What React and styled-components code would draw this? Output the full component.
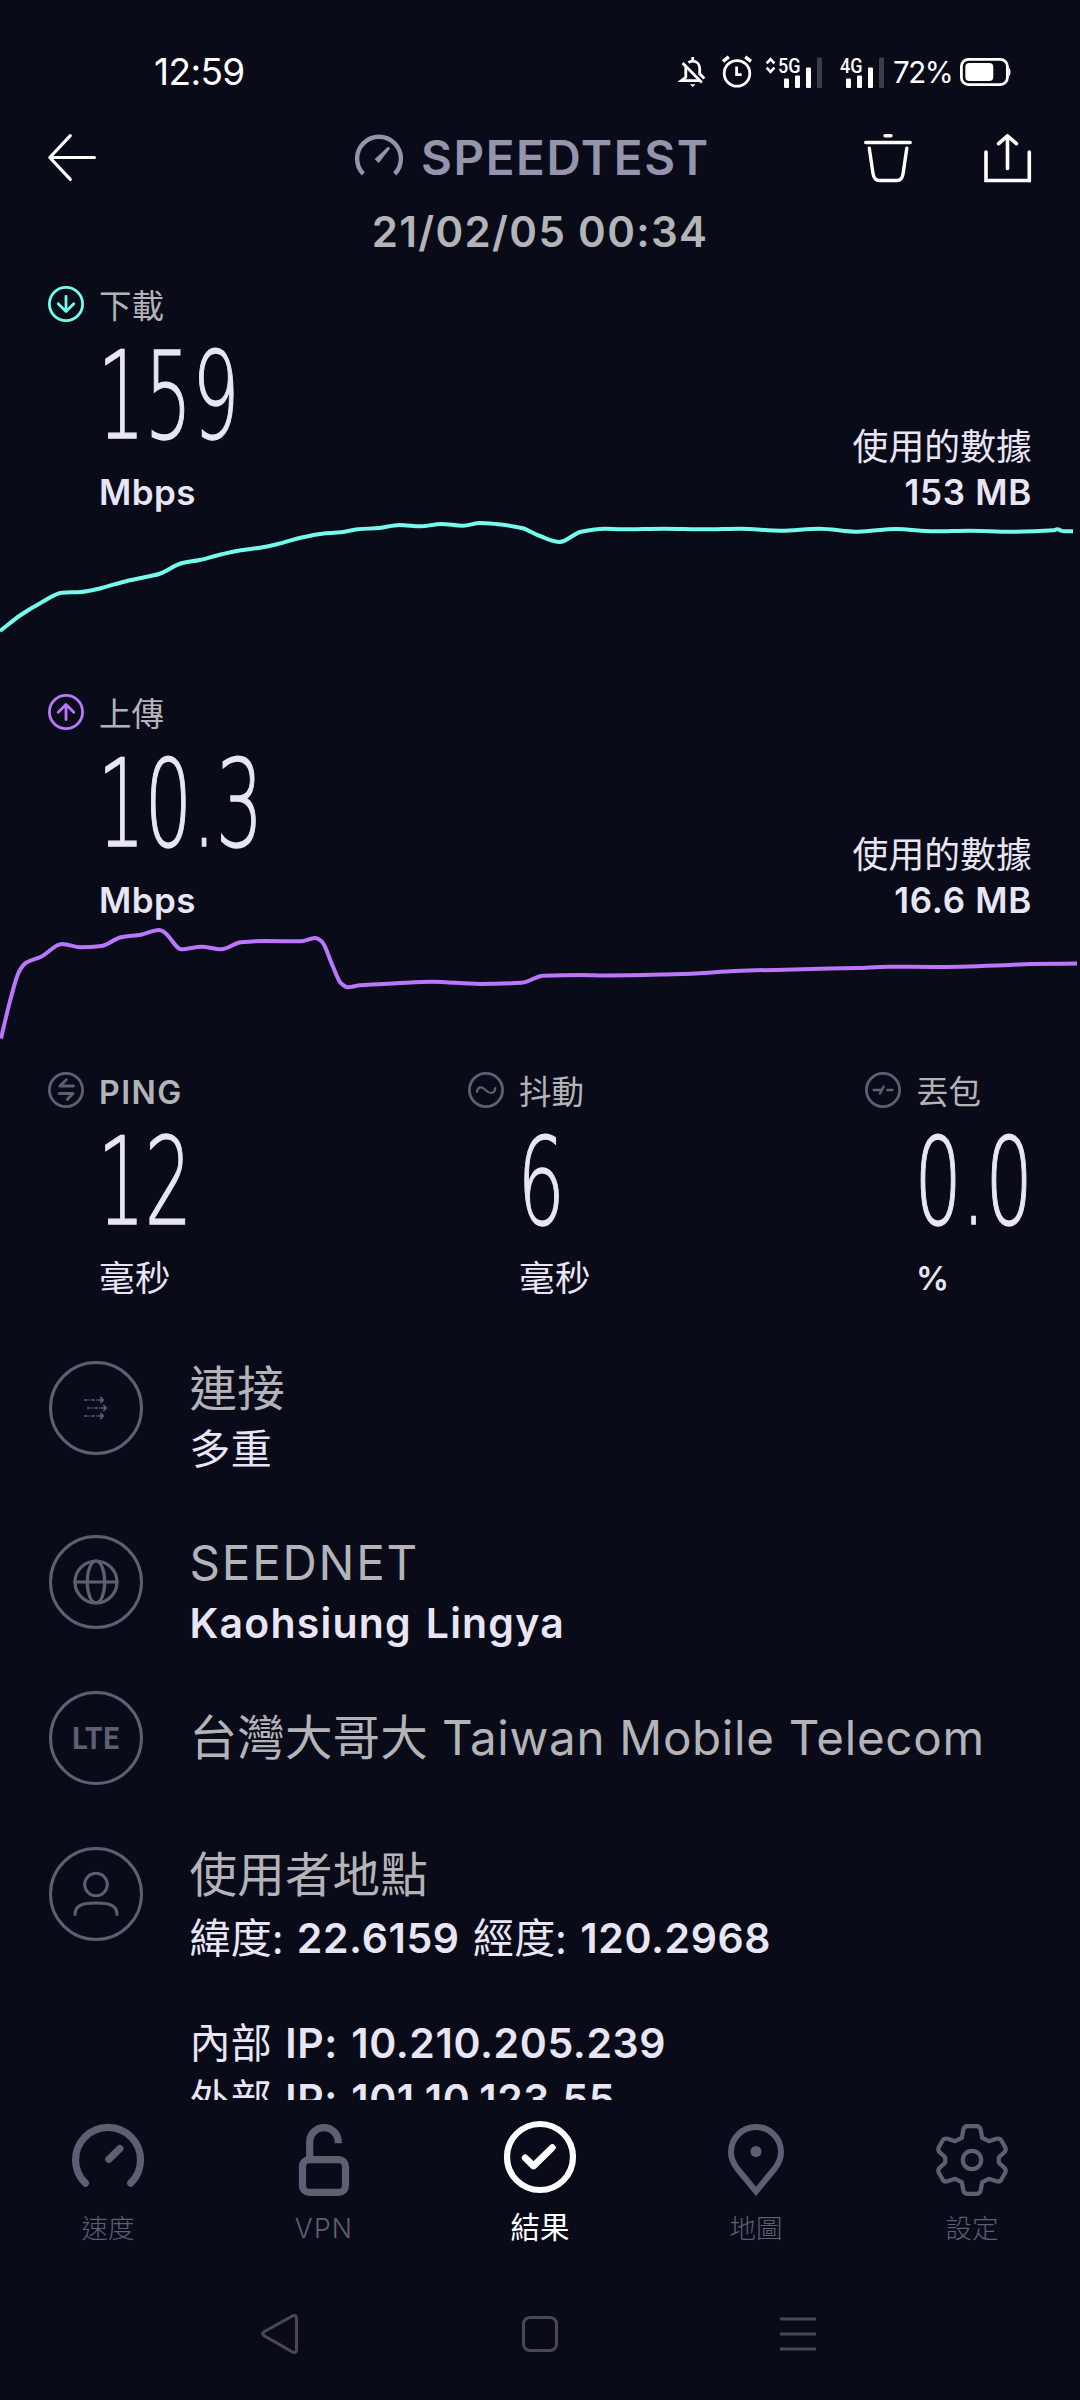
import React from "react";
import styled, { createGlobalStyle, css } from "styled-components";

const colors = {
  base: "#0a0b19",
  text: "#e8e6f5",
  muted: "#b4b4b8",
  logo: "#9494ac",
  icon: "#5f5f73",
  download: "#73fbee",
  upload: "#ba77fb",
  nav: "#494951",
  white: "#ffffff",
};

const GlobalStyle = createGlobalStyle`
  body {
    margin: 0;
    background: ${colors.base};
  }
  * {
    box-sizing: border-box;
  }
  svg {
    display: block;
    flex: none;
    overflow: visible;
  }
`;

const Screen = styled.div`
  width: 1080px;
  height: 2400px;
  display: flex;
  flex-direction: column;
  overflow: hidden;
  background: ${colors.base};
  color: ${colors.text};
  font-family: Inter, "Noto Sans CJK TC", sans-serif;
  white-space: nowrap;
`;

const Content = styled.main`
  height: 1992px;
  flex: none;
  overflow: hidden;
`;

/* status bar */

const StatusBar = styled.div`
  height: 108px;
  flex: none;
  padding: 36px 69px 0 154px;
  display: flex;
  align-items: center;
  justify-content: space-between;
  color: ${colors.white};
`;

const Clock = styled.span`
  font-size: 37px;
  line-height: 40px;
  letter-spacing: -0.6px;
`;

const StatusIcons = styled.div`
  display: flex;
  align-items: center;
`;

const StatusSlot = styled.span`
  margin-left: ${({ gap }) => gap}px;
`;

const BatteryLevel = styled(StatusSlot)`
  width: 58px;
  font-size: 29.5px;
  line-height: 32px;
  letter-spacing: -1.5px;
`;

/* header */

const Header = styled.header`
  height: 99px;
  padding: 0 48px;
  display: grid;
  grid-template-columns: 307px 1fr 168px;
  align-items: center;
`;

const Logo = styled.div`
  display: flex;
  align-items: center;
  gap: 18px;
  color: ${colors.logo};
  font-size: 47.5px;
  line-height: 48px;
  font-weight: 600;
  letter-spacing: 1.6px;
`;

const Actions = styled.div`
  display: flex;
  justify-content: space-between;
`;

const TestDate = styled.div`
  height: 48px;
  text-align: center;
  color: ${colors.muted};
  font-size: 42px;
  line-height: 49px;
  font-weight: 600;
  letter-spacing: 1.35px;
`;

/* metrics */

const SpeedBlock = styled.section`
  height: 408px;
  padding-top: 31px;
`;

const SpeedSummary = styled.div`
  display: flex;
  justify-content: space-between;
  align-items: flex-end;
  padding: 0 48px;
`;

const Metric = styled.div`
  display: grid;
  grid-template-columns: 51px auto;
  justify-content: start;
`;

const MetricLabel = styled.span`
  height: 36px;
  color: ${colors.muted};
  font-size: ${({ latin }) => (latin ? 32 : 32.5)}px;
  line-height: 41px;
  font-weight: ${({ latin }) => (latin ? 600 : 400)};
  letter-spacing: ${({ latin }) => (latin ? 1.5 : 0)}px;
`;

const MetricValue = styled.span`
  grid-column: 2;
  margin-top: 22px;
  width: 150px;
  font-family: "DejaVu Sans", sans-serif;
  font-size: 121px;
  line-height: 100px;
  font-weight: 200;
  letter-spacing: 0;
  -webkit-text-stroke: 1.4px ${colors.text};
  transform: translate(-1.5px, 2.5px) scaleX(0.615);
  transform-origin: 0 50%;
`;

const MetricUnit = styled.span`
  grid-column: 2;
  margin-top: 30px;
  height: 37px;
  font-size: ${({ size }) => size}px;
  line-height: ${({ cjk }) => (cjk ? 37.5 : 36)}px;
  font-weight: ${({ cjk }) => (cjk ? 400 : 600)};
  letter-spacing: 0.4px;
`;

const DataUsed = styled.div`
  padding-bottom: 1px;
  text-align: right;
  font-size: 35px;
  line-height: 36px;
  font-weight: 600;
  letter-spacing: 0.7px;
`;

const DataCaption = styled.div`
  margin-bottom: 9px;
  font-size: 35.8px;
  font-weight: 400;
  letter-spacing: 0.1px;
`;

const ChartBox = styled.div`
  height: 125px;
  margin-top: 4px;
`;

const Latency = styled.section`
  display: grid;
  grid-template-columns: 420px 397px auto;
  justify-content: start;
  padding: 1px 0 0 48px;
`;

/* connection details */

const Details = styled.section`
  padding: 62px 0 0 49px;
`;

const DetailRow = styled.div`
  height: ${({ height }) => height}px;
  display: grid;
  grid-template-columns: 140.5px 1fr;
  align-items: start;
`;

const DetailBadge = styled.div`
  width: 94px;
  height: 94px;
  margin-top: 2px;
  border: 3px solid ${colors.icon};
  border-radius: 50%;
  display: flex;
  align-items: center;
  justify-content: center;
  color: ${colors.icon};
`;

const NetworkType = styled.span`
  font-family: Roboto, sans-serif;
  font-size: 32px;
  font-weight: 700;
  letter-spacing: 0.8px;
  transform: scaleX(0.88);
`;

const DetailTitle = styled.div`
  color: ${colors.muted};
  font-size: 47.5px;
  line-height: 60px;
  font-weight: 400;
  letter-spacing: ${({ spacing = 0 }) => spacing}px;
  ${({ single }) =>
    single &&
    css`
      padding-top: 19px;
    `}
`;

const DetailText = styled.div`
  font-size: 41px;
  line-height: ${({ height = 60 }) => height}px;
  font-weight: 600;
  letter-spacing: ${({ spacing = 0.6 }) => spacing}px;
  word-spacing: 2.4px;
`;

/* zero line height keeps the taller CJK metrics from stretching the row */
const Cjk = styled.span`
  font-family: "Noto Sans CJK TC", sans-serif;
  font-weight: 400;
  line-height: 0;
  letter-spacing: 0.2px;
`;

/* bottom bars */

const TabBar = styled.nav`
  height: 168px;
  flex: none;
  display: grid;
  grid-template-columns: repeat(5, 1fr);
`;

const Tab = styled.div`
  display: flex;
  flex-direction: column;
  align-items: center;
  padding-top: ${({ active }) => (active ? 21 : 24)}px;
  color: ${({ active }) => (active ? colors.white : colors.icon)};
  font-size: ${({ active }) => (active ? 29.5 : 26.5)}px;
  line-height: 32px;
  font-weight: ${({ active }) => (active ? 400 : 300)};
`;

const TabLabel = styled.span`
  margin-top: ${({ active }) => (active ? 18 : 16)}px;
  letter-spacing: ${({ latin }) => (latin ? 1.3 : 0)}px;
`;

const NavBar = styled.div`
  height: 132px;
  flex: none;
  padding-left: 260px;
  display: flex;
  align-items: center;
  gap: 222px;
`;

const Icon = ({ width, height = width, stroke, children, ...props }) => (
  <svg
    width={width}
    height={height}
    viewBox={`0 0 ${width} ${height}`}
    fill="none"
    stroke="currentColor"
    strokeWidth={stroke}
    strokeLinecap="round"
    strokeLinejoin="round"
    {...props}
  >
    {children}
  </svg>
);

const BellOffIcon = () => (
  <Icon width={26} height={30} stroke={2.8} strokeLinecap="butt" strokeLinejoin="miter">
    <path d="M8.5 5.6C9.7 4.6 11 4.2 12.7 4.2c4.4 0 7 3.4 7 7.6v5l4.6 4.6" />
    <path d="M5.8 9.5v10.8L1.4 23.6h18.4M12.7 4V0" />
    <path d="M2.6 6 21.8 25.5" />
    <path d="M10 27.2h5.4L12.7 30z" fill="currentColor" stroke="none" />
  </Icon>
);

const AlarmIcon = () => (
  <Icon width={30} height={32} stroke={2.8} strokeLinecap="butt">
    <circle cx="15" cy="17.4" r="12.8" />
    <path d="M14.6 10.5v8.2h5" strokeLinejoin="miter" />
    <path d="M1 5.4 6.8.8M29 5.4 23.2.8" strokeWidth="3.4" />
  </Icon>
);

const SignalIcon = ({ label, roaming }) => {
  const offset = roaming ? 12 : 0;
  return (
    <svg width={44 + offset} height="31" viewBox={`${-offset} 0 ${44 + offset} 31`} fill="#fff">
      {roaming && (
        <path
          d="M-11.4 6.4-7.5 2.2-3.6 6.4M-11.4 10.6-7.5 14.8-3.6 10.6"
          fill="none"
          stroke="#fff"
          strokeWidth="2.6"
        />
      )}
      <text
        x="0"
        y="15.6"
        fontSize="20.5"
        fontWeight="500"
        fontFamily="Roboto, sans-serif"
        textLength="22.5"
        lengthAdjust="spacingAndGlyphs"
      >
        {label}
      </text>
      <rect x="6" y="21.5" width="5" height="9.5" rx="1" />
      <rect x="17" y="18.5" width="5" height="12.5" rx="1" />
      <rect x="28" y="10.5" width="5" height="20.5" rx="1" />
      <rect x="39" y="0.5" width="5" height="30.5" rx="1" fill="#3c3b47" />
    </svg>
  );
};

const BatteryIcon = () => (
  <Icon width={51} height={28} stroke={2.8}>
    <rect x="1.4" y="1.4" width="46" height="25.2" rx="7" />
    <rect x="5.3" y="5" width="28" height="18" rx="4" fill="currentColor" stroke="none" />
    <path d="M48.5 9.5c1.6 1 2 2.5 2 4.5s-.4 3.5-2 4.5z" fill="currentColor" stroke="none" />
  </Icon>
);

const BackIcon = () => (
  <Icon width={48} stroke={3.2} color="#fff">
    <path d="M46.4 23.5H2M22.3 1.7 1.8 23.5 22.3 45.4" />
  </Icon>
);

const LogoIcon = () => (
  <Icon width={48} stroke={4.4} strokeLinecap="butt">
    <path d="M8.3 39.9A21.9 21.9 0 1 1 39.7 39.9" />
    <path d="M19.6 25.3 23.8 29 35.2 14.3 33 12.7z" fill="currentColor" stroke="none" />
  </Icon>
);

const TrashIcon = () => (
  <Icon width={48} stroke={3.4} color="#fff">
    <path d="M21 1.7h6M1.7 8.5h44.5M5.3 14.3 9 39.5q1.1 7 6.5 7h17.3q5.4 0 6.3-7L42.8 14.3" />
  </Icon>
);

const ShareIcon = () => (
  <Icon width={48} stroke={3.6} color="#fff">
    <path d="M2 18v28.5h43.3V18" strokeLinejoin="miter" />
    <path d="M23.5 34.5V2.5M14.6 9.7 23.5 1.9l8.9 7.8" />
  </Icon>
);

const CircleIcon = ({ children, color = colors.icon }) => (
  <Icon width={36} stroke={2.8} color={color}>
    <circle cx="18" cy="18" r="16.6" />
    {children}
  </Icon>
);

const GaugeIcon = () => (
  <Icon width={72} stroke={7.2}>
    <path d="M13.4 59.2A32.5 32.5 0 1 1 58.7 59.2" />
    <path d="M36.8 35.3 47.8 24.6" />
  </Icon>
);

const UnlockIcon = () => (
  <Icon width={72} stroke={7.2} strokeLinecap="butt">
    <rect x="14.5" y="35.6" width="43" height="32.8" rx="7" />
    <path d="M21.7 34V18a14.3 14.3 0 0 1 28.6 0v1.2" />
  </Icon>
);

const CheckIcon = () => (
  <Icon width={72} stroke={6.2}>
    <circle cx="36" cy="36" r="33" />
    <path d="M21.2 36.9 29.5 45 48.3 26.6" strokeWidth="6.8" />
  </Icon>
);

const PinIcon = () => (
  <Icon width={72} stroke={6} strokeLinejoin="miter">
    <path d="M36 67.3 17.2 44.5C13.3 39.5 11 34.5 11 28a25 25 0 0 1 50 0c0 6.5-2.3 11.5-6.2 16.5z" />
    <circle cx="36" cy="27.5" r="5.5" fill="currentColor" stroke="none" />
  </Icon>
);

const GearIcon = () => (
  <Icon width={72} stroke={4.2}>
    <path d="M31.5 2.2h9q3.3 0 4.1 3.3l1.6 8.3 6.7 3.4 7.6-2.5q3.3-.8 5 2l3.6 6.3q1.6 3-.8 5.2l-5.5 5v5.6l5.5 5q2.4 2.2.8 5.2l-3.6 6.3q-1.7 2.8-5 2l-7.6-2.5-6.7 3.4-1.6 8.3q-.8 3.3-4.1 3.3h-9q-3.3 0-4.1-3.3l-1.6-8.3-6.7-3.4-7.6 2.5q-3.3.8-5-2l-3.6-6.3q-1.6-3 .8-5.2l5.5-5v-5.6l-5.5-5q-2.4-2.2-.8-5.2l3.6-6.3q1.7-2.8 5-2l7.6 2.5 6.7-3.4 1.6-8.3q.8-3.3 4.1-3.3z" />
    <circle cx="36" cy="36" r="9.2" />
  </Icon>
);

const MultiIcon = () => (
  <Icon width={26} stroke={1.7} strokeLinecap="butt">
    {[
      [1, 5],
      [4, 13],
      [1, 21],
    ].map(([x, y]) => (
      <g key={y}>
        <path d={`M${x} ${y}h14`} strokeDasharray="3.5 1.3 1.2 1.3" />
        <path d={`M${x + 14} ${y}h5M${x + 16.3} ${y - 3}l3 3-3 3`} />
      </g>
    ))}
  </Icon>
);

const GlobeIcon = () => (
  <Icon width={46} stroke={3.2}>
    <circle cx="23" cy="23" r="21" />
    <ellipse cx="23" cy="23" rx="8.7" ry="21" />
    <path d="M2 23h42" />
  </Icon>
);

const UserIcon = () => (
  <Icon width={48} stroke={3}>
    <circle cx="24" cy="14.5" r="11.3" />
    <path d="M3 44.5C3 36 9 33 24 33s21 3 21 11.5" />
  </Icon>
);

// Monotone cubic through the samples, so the line never overshoots a reading
const toPath = (points) => {
  const slope = (i) =>
    (points[i + 1][1] - points[i][1]) / (points[i + 1][0] - points[i][0]);
  const tangents = points.map((_, i) => {
    if (i === 0) return slope(0);
    if (i === points.length - 1) return slope(i - 1);
    const a = slope(i - 1);
    const b = slope(i);
    return a * b <= 0 ? 0 : (2 * a * b) / (a + b);
  });
  return points.reduce((d, [x, y], i) => {
    if (i === 0) return `M${x} ${y}`;
    const [px, py] = points[i - 1];
    const dx = (x - px) / 3;
    return `${d}C${px + dx} ${py + dx * tangents[i - 1]} ${x - dx} ${
      y - dx * tangents[i]
    } ${x} ${y}`;
  }, "");
};

const downloadSamples = [
  [0, 116], [20.7, 100], [41, 87.7], [62, 77.7], [81, 77], [101.6, 73],
  [124, 66.7], [141, 63], [159, 59], [181.5, 48.3], [199.7, 45], [218.7, 40],
  [241, 35.3], [260, 32.7], [277, 29.3], [299.6, 23], [322, 18.7], [341, 17.3],
  [358, 14.3], [379, 13], [399.5, 10], [421, 11.3], [441, 9], [463, 10.7],
  [480, 8], [496, 9], [521.7, 13], [540, 21], [559.6, 27], [581, 16.7],
  [605, 13.7], [622, 14.3], [664, 13.7], [705, 14.3], [740, 13.7], [781, 15.7],
  [819, 13.7], [858, 16.7], [896, 14], [934, 16.3], [970, 15.7], [1010, 16.7],
  [1054, 15.3], [1057, 14.3], [1064, 16.3], [1073, 16.3],
];

const uploadSamples = [
  [1, 115.5], [10.3, 77], [19, 48.7], [26, 39.7], [41, 33.7], [62, 21],
  [81, 24.3], [101.6, 23], [121, 14.3], [141, 11.7], [159, 7], [164, 9],
  [181.5, 26.3], [201.4, 23.7], [221, 26.3], [241, 19.3], [265, 18],
  [301, 18.3], [315, 15], [322, 18.7], [332.3, 42], [341, 60.3], [347.8, 64.3],
  [360, 62.3], [396, 60.3], [432, 58.7], [480, 61], [521.7, 59.7], [543, 52.7],
  [582, 52], [604, 52.5], [673, 51.3], [696, 50.5], [735, 48], [811, 46],
  [857, 45], [888, 43.7], [934, 44], [1010, 42], [1030, 41], [1077, 40.5],
];

const Chart = ({ samples, color }) => (
  <ChartBox>
    <svg width="1080" height="125" viewBox="0 0 1080 125">
      <path d={toPath(samples)} fill="none" stroke={color} strokeWidth="4" />
    </svg>
  </ChartBox>
);

const unitSizes = { Mbps: 35, 毫秒: 35.5, "%": 33 };

const Reading = ({ icon, label, value, unit }) => (
  <Metric>
    {icon}
    <MetricLabel latin={label === "PING" ? 1 : undefined}>{label}</MetricLabel>
    <MetricValue>{value}</MetricValue>
    <MetricUnit size={unitSizes[unit]} cjk={unit === "毫秒" ? 1 : undefined}>
      {unit}
    </MetricUnit>
  </Metric>
);

const Speed = ({ icon, label, value, used, samples, color }) => (
  <SpeedBlock>
    <SpeedSummary>
      <Reading icon={icon} label={label} value={value} unit="Mbps" />
      <DataUsed>
        <DataCaption>使用的數據</DataCaption>
        {used}
      </DataUsed>
    </SpeedSummary>
    <Chart samples={samples} color={color} />
  </SpeedBlock>
);

const tabs = [
  { label: "速度", icon: <GaugeIcon /> },
  { label: "VPN", icon: <UnlockIcon />, latin: 1 },
  { label: "結果", icon: <CheckIcon />, active: 1 },
  { label: "地圖", icon: <PinIcon /> },
  { label: "設定", icon: <GearIcon /> },
];

const App = () => (
  <Screen>
    <GlobalStyle />
    <StatusBar>
      <Clock>12:59</Clock>
      <StatusIcons>
        <BellOffIcon />
        <StatusSlot gap={16}>
          <AlarmIcon />
        </StatusSlot>
        <StatusSlot gap={14}>
          <SignalIcon label="5G" roaming />
        </StatusSlot>
        <StatusSlot gap={18}>
          <SignalIcon label="4G" />
        </StatusSlot>
        <BatteryLevel gap={9}>72%</BatteryLevel>
        <StatusSlot gap={9}>
          <BatteryIcon />
        </StatusSlot>
      </StatusIcons>
    </StatusBar>

    <Content>
      <Header>
        <BackIcon />
        <Logo>
          <LogoIcon />
          SPEEDTEST
        </Logo>
        <Actions>
          <TrashIcon />
          <ShareIcon />
        </Actions>
      </Header>
      <TestDate>21/02/05 00:34</TestDate>

      <Speed
        label="下載"
        value="159"
        used="153 MB"
        samples={downloadSamples}
        color={colors.download}
        icon={
          <CircleIcon color={colors.download}>
            <path d="M18 10.5V25M10.2 17.8 18 25.4l7.8-7.6" />
          </CircleIcon>
        }
      />
      <Speed
        label="上傳"
        value="10.3"
        used="16.6 MB"
        samples={uploadSamples}
        color={colors.upload}
        icon={
          <CircleIcon color={colors.upload}>
            <path d="M18 25.5V11M10.2 18.2 18 10.6l7.8 7.6" />
          </CircleIcon>
        }
      />

      <Latency>
        <Reading
          label="PING"
          value="12"
          unit="毫秒"
          icon={
            <CircleIcon>
              <path d="M25.5 14H11.8L18.3 7.8M11.3 21.5H25L19.3 27.5" />
            </CircleIcon>
          }
        />
        <Reading
          label="抖動"
          value="6"
          unit="毫秒"
          icon={
            <CircleIcon>
              <path d="M9 19.8C9.6 14.5 14 14 17.6 18S26.6 22.5 27.2 16.2" strokeWidth="2.2" />
            </CircleIcon>
          }
        />
        <Reading
          label="丟包"
          value="0.0"
          unit="%"
          icon={
            <CircleIcon>
              <path d="M8.8 18h7.4M15 21.5 18.6 14.5M22.3 18h5.2" strokeWidth="2.5" />
            </CircleIcon>
          }
        />
      </Latency>

      <Details>
        <DetailRow height={174}>
          <DetailBadge>
            <MultiIcon />
          </DetailBadge>
          <div>
            <DetailTitle>
              <Cjk>連接</Cjk>
            </DetailTitle>
            <DetailText>
              <Cjk>多重</Cjk>
            </DetailText>
          </div>
        </DetailRow>
        <DetailRow height={156}>
          <DetailBadge>
            <GlobeIcon />
          </DetailBadge>
          <div>
            <DetailTitle spacing={1.8}>SEEDNET</DetailTitle>
            <DetailText spacing={1.2}>Kaohsiung Lingya</DetailText>
          </div>
        </DetailRow>
        <DetailRow height={156}>
          <DetailBadge>
            <NetworkType>LTE</NetworkType>
          </DetailBadge>
          <DetailTitle single={1} spacing={0.7}>
            <Cjk>台灣大哥大</Cjk> Taiwan Mobile Telecom
          </DetailTitle>
        </DetailRow>
        <DetailRow height={300}>
          <DetailBadge>
            <UserIcon />
          </DetailBadge>
          <div>
            <DetailTitle>
              <Cjk>使用者地點</Cjk>
            </DetailTitle>
            <DetailText height={67}>
              <Cjk>緯度:</Cjk> 22.6159 <Cjk>經度:</Cjk> 120.2968
            </DetailText>
            <DetailText height={43}>&nbsp;</DetailText>
            <DetailText height={56}>
              <Cjk>內部</Cjk> IP: 10.210.205.239
            </DetailText>
            <DetailText height={56}>
              <Cjk>外部</Cjk> IP: 101.10.123.55
            </DetailText>
          </div>
        </DetailRow>
      </Details>
    </Content>

    <TabBar>
      {tabs.map(({ label, icon, active, latin }) => (
        <Tab key={label} active={active}>
          {icon}
          <TabLabel active={active} latin={latin}>
            {label}
          </TabLabel>
        </Tab>
      ))}
    </TabBar>
    <NavBar>
      <Icon width={40} height={42} stroke={3} color={colors.nav}>
        <path d="M32 3.2 4 18.7q-2.6 1.8 0 3.9L32 38.8q4.5 2 4.5-2V5.2q0-4-4.5-2z" />
      </Icon>
      <Icon width={36} stroke={3} color={colors.nav}>
        <rect x="1.5" y="1.5" width="33" height="33" rx="6.5" />
      </Icon>
      <Icon width={36} stroke={3} strokeLinecap="butt" color={colors.nav}>
        <path d="M0 3h36M0 18h36M0 33h36" />
      </Icon>
    </NavBar>
  </Screen>
);

export default App;
